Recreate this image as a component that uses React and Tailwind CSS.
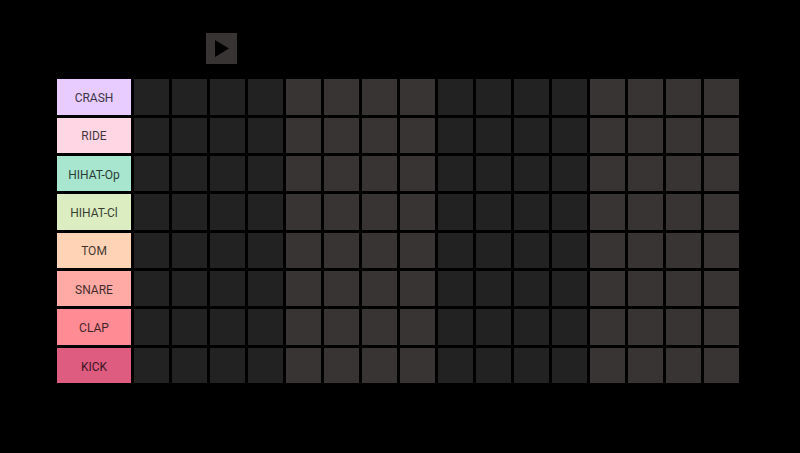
const rows = [
  { name: "CRASH", bg: "bg-[#e8ccff]" },
  { name: "RIDE", bg: "bg-[#ffd6e4]" },
  { name: "HIHAT-Op", bg: "bg-[#a8e6cf]" },
  { name: "HIHAT-Cl", bg: "bg-[#dcedc1]" },
  { name: "TOM", bg: "bg-[#ffd3b6]" },
  { name: "SNARE", bg: "bg-[#ffaaa5]" },
  { name: "CLAP", bg: "bg-[#ff8b94]" },
  { name: "KICK", bg: "bg-[#de5c80]" },
];
const steps = Array.from({ length: 16 }, (_, i) => i);

export default function App() {
  return (
    <div className="h-[453px] w-[800px] bg-black flex flex-col overflow-hidden font-['Roboto','Noto_Sans',sans-serif]">
      <div className="h-[79.2px] pt-[33px] pl-[206px] shrink-0">
        <button className="w-[31px] h-[31px] pl-[1px] bg-[#383433] flex items-center justify-center">
          <svg width="14" height="17" viewBox="0 0 14 17">
            <polygon points="0,0 14,8.5 0,17" fill="#000" />
          </svg>
        </button>
      </div>
      <div className="ml-[57px] w-[682px] h-[304px] grid grid-rows-8 gap-y-[3px]">
        {rows.map((r) => (
          <div key={r.name} className="flex gap-[3px] min-h-0">
            <div className={`w-[74px] shrink-0 flex items-center justify-center pt-[2px] text-[12px] text-black ${r.bg}`}>
              <span className="opacity-75">{r.name}</span>
            </div>
            <div className="flex-1 grid grid-cols-16 gap-x-[3px]">
              {steps.map((s) => (
                <div
                  key={s}
                  className={Math.floor(s / 4) % 2 === 0 ? "bg-[#232222]" : "bg-[#383433]"}
                />
              ))}
            </div>
          </div>
        ))}
      </div>
    </div>
  );
}
